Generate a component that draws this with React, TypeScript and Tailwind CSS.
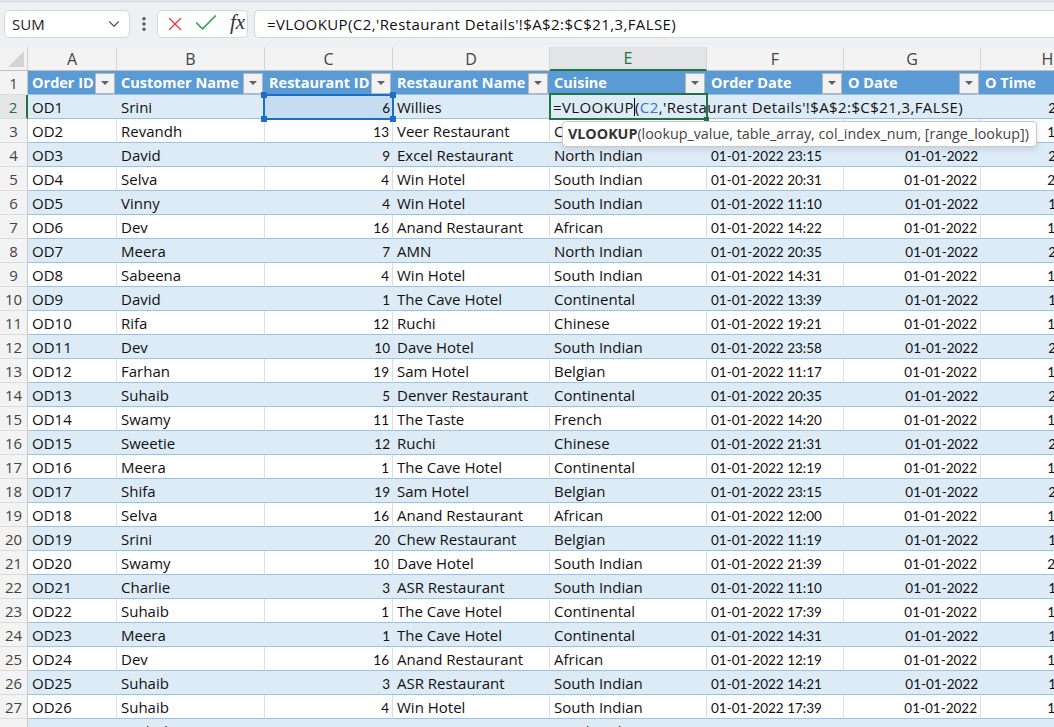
import React from "react";
import { ChevronDown, EllipsisVertical, X, Check } from "lucide-react";

const W = [
  "w-[89px]",
  "w-[148px]",
  "w-[128px]",
  "w-[157px]",
  "w-[157px]",
  "w-[137px]",
  "w-[137px]",
  "w-[134px]",
];
const LETTERS = ["A", "B", "C", "D", "E", "F", "G", "H"];
const HEADERS = [
  "Order ID",
  "Customer Name",
  "Restaurant ID",
  "Restaurant Name",
  "Cuisine",
  "Order Date",
  "O Date",
  "O Time",
];

const TXT = "font-['Open_Sans',sans-serif] text-[15px]";
const NUM = "font-['Lato',sans-serif] text-[13.5px]";

type Row = [string, string, number, string, string, string];

const DATA: Row[] = [
  ["OD1", "Srini", 6, "Willies", "", "22:00"],
  ["OD2", "Revandh", 13, "Veer Restaurant", "Continental", "10:30"],
  ["OD3", "David", 9, "Excel Restaurant", "North Indian", "23:15"],
  ["OD4", "Selva", 4, "Win Hotel", "South Indian", "20:31"],
  ["OD5", "Vinny", 4, "Win Hotel", "South Indian", "11:10"],
  ["OD6", "Dev", 16, "Anand Restaurant", "African", "14:22"],
  ["OD7", "Meera", 7, "AMN", "North Indian", "20:35"],
  ["OD8", "Sabeena", 4, "Win Hotel", "South Indian", "14:31"],
  ["OD9", "David", 1, "The Cave Hotel", "Continental", "13:39"],
  ["OD10", "Rifa", 12, "Ruchi", "Chinese", "19:21"],
  ["OD11", "Dev", 10, "Dave Hotel", "South Indian", "23:58"],
  ["OD12", "Farhan", 19, "Sam Hotel", "Belgian", "11:17"],
  ["OD13", "Suhaib", 5, "Denver Restaurant", "Continental", "20:35"],
  ["OD14", "Swamy", 11, "The Taste", "French", "14:20"],
  ["OD15", "Sweetie", 12, "Ruchi", "Chinese", "21:31"],
  ["OD16", "Meera", 1, "The Cave Hotel", "Continental", "12:19"],
  ["OD17", "Shifa", 19, "Sam Hotel", "Belgian", "23:15"],
  ["OD18", "Selva", 16, "Anand Restaurant", "African", "12:00"],
  ["OD19", "Srini", 20, "Chew Restaurant", "Belgian", "11:19"],
  ["OD20", "Swamy", 10, "Dave Hotel", "South Indian", "21:39"],
  ["OD21", "Charlie", 3, "ASR Restaurant", "South Indian", "11:10"],
  ["OD22", "Suhaib", 1, "The Cave Hotel", "Continental", "17:39"],
  ["OD23", "Meera", 1, "The Cave Hotel", "Continental", "14:31"],
  ["OD24", "Dev", 16, "Anand Restaurant", "African", "12:19"],
  ["OD25", "Suhaib", 3, "ASR Restaurant", "South Indian", "14:21"],
  ["OD26", "Suhaib", 4, "Win Hotel", "South Indian", "17:39"],
  ["OD27", "Rashid", 7, "AMN", "North Indian", "14:31"],
];

function FilterBtn() {
  return (
    <div className="w-[20px] h-[21px] shrink-0 bg-[#f2f2f2] border border-[#b8b8b8] flex items-center justify-center">
      <div className="w-0 h-0 border-l-[4px] border-r-[4px] border-t-[4px] border-l-transparent border-r-transparent border-t-[#606060]" />
    </div>
  );
}

function RowHeader({ n }: { n: number }) {
  const active = n === 2;
  return (
    <div
      className={`w-[28px] shrink-0 h-full flex items-center justify-center pt-[1px] border-b border-[#dcdcdc] font-['Open_Sans',sans-serif] text-[15px] ${
        active
          ? "bg-[#e4e6e8] text-[#217346] border-r-2 border-r-[#217346]"
          : "bg-[#f3f3f3] text-[#444] border-r border-r-[#c8c8c8]"
      }`}
    >
      {n}
    </div>
  );
}

function Cell({
  i,
  banded,
  right,
  num,
  children,
  extra = "",
}: {
  i: number;
  banded: boolean;
  right?: boolean;
  num?: boolean;
  children?: React.ReactNode;
  extra?: string;
}) {
  return (
    <div
      className={`${W[i]} shrink-0 h-full flex items-center overflow-hidden whitespace-nowrap border-b border-b-[#9bc2e6] text-[#111] ${
        num ? NUM + " pt-[3px]" : TXT + " pt-[1px]"
      } ${right ? "justify-end pr-[3px] pl-[4px]" : "pl-[4px] pr-[2px]"} ${
        banded ? "bg-[#ddebf7]" : "bg-white border-r border-r-[#dedede]"
      } ${extra}`}
    >
      {children}
    </div>
  );
}

function DataRow({ row, n }: { row: Row; n: number }) {
  const banded = n % 2 === 0;
  const [id, cust, rid, rname, cuisine, time] = row;
  const isEdit = n === 2;
  return (
    <div className="flex h-[24px]">
      <RowHeader n={n} />
      <Cell i={0} banded={banded}>{id}</Cell>
      <Cell i={1} banded={banded}>{cust}</Cell>
      <Cell i={2} banded={banded} right num extra={isEdit ? "!bg-[#c6dcf1]" : ""}>
        {rid}
      </Cell>
      <Cell i={3} banded={banded}>{rname}</Cell>
      {isEdit ? (
        <div
          className={`w-[431px] shrink-0 h-full flex items-center overflow-hidden whitespace-nowrap border-b border-b-[#9bc2e6] bg-[#ddebf7] pl-[3px] pt-[1px] text-[#111] tracking-[0.4px] ${TXT}`}
        >
          <span>=VLOOKUP</span>
          <span className="inline-block w-px h-[18px] bg-black" />
          <span>(</span>
          <span className="text-[#2f78c4]">C2</span>
          <span>,'Restaurant Details'!$A$2:$C$21,3,FALSE)</span>
        </div>
      ) : (
        <>
          <Cell i={4} banded={banded}>{cuisine}</Cell>
          <Cell i={5} banded={banded} num>{`01-01-2022 ${time}`}</Cell>
          <Cell i={6} banded={banded} right num>01-01-2022</Cell>
        </>
      )}
      <Cell i={7} banded={banded} right num extra="!pr-[13px]">
        {time}:00
      </Cell>
    </div>
  );
}

export default function App() {
  return (
    <div className="w-[1054px] h-[727px] overflow-hidden bg-[#eef0f3] font-['Open_Sans',sans-serif] text-[14.5px] relative">
      {/* top strip */}
      <div className="h-[3px] bg-[#dfe1e5]" />
      {/* formula bar */}
      <div className="flex items-center h-[28px] mt-[7px] pl-[4px]">
        <div className="w-[126px] h-full bg-white border border-[#d6d6d6] rounded-[5px] flex items-center justify-between pl-[7px] pr-[6px] text-[15px] text-[#222]">
          <span>SUM</span>
          <ChevronDown size={18} strokeWidth={1.5} className="text-[#555]" />
        </div>
        <div className="w-[27px] flex items-center justify-center text-[#555]">
          <EllipsisVertical size={18} strokeWidth={2.5} />
        </div>
        <div className="w-[91px] h-full bg-white border border-[#d6d6d6] rounded-[5px] flex items-center pl-[6px] gap-[6px]">
          <X size={22} strokeWidth={1.5} className="text-[#e03a3e]" />
          <Check size={28} strokeWidth={1.5} className="text-[#3ea454] -mt-[2px]" />
          <span className="font-['Liberation_Serif',serif] italic text-[21px] leading-none text-[#333] ml-[4px] -mt-[3px]">
            fx
          </span>
        </div>
        <div className="ml-[6px] flex-1 h-full bg-white border border-[#d6d6d6] border-r-0 rounded-l-[5px] flex items-center pl-[12px] text-[#111] text-[15px] tracking-[0.4px] whitespace-nowrap">
          =VLOOKUP(C2,'Restaurant Details'!$A$2:$C$21,3,FALSE)
        </div>
      </div>

      {/* sheet */}
      <div className="mt-[9px] relative">
        {/* column headers */}
        <div className="flex h-[24px]">
          <div className="w-[28px] shrink-0 h-full bg-[#f3f3f3] border-r border-[#d0d0d0] border-b border-b-[#c0c0c0] relative">
            <svg width="28" height="24" className="absolute left-0 top-0">
              <polygon points="8,20 24,20 24,4" fill="#d4d4d4" />
            </svg>
          </div>
          {LETTERS.map((l, i) => (
            <div
              key={l}
              className={`${W[i]} shrink-0 h-full flex items-center justify-center text-[16px] border-r border-r-[#d4d4d4] ${
                i === 4
                  ? "bg-[#e2e4e6] text-[#217346] border-b-2 border-b-[#217346]"
                  : "bg-[#f3f3f3] text-[#444] border-b border-b-[#c0c0c0]"
              }`}
            >
              {l}
            </div>
          ))}
        </div>
        {/* header row 1 */}
        <div className="flex h-[24px]">
          <RowHeader n={1} />
          {HEADERS.map((h, i) => (
            <div
              key={h}
              className={`${W[i]} shrink-0 h-full bg-[#5b9bd5] border-b border-b-[#9bc2e6] flex items-center pl-[4px] pr-[2px] pt-[1px] text-white font-bold whitespace-nowrap overflow-hidden`}
            >
              <span className="flex-1 overflow-hidden">{h}</span>
              {i < 7 && <FilterBtn />}
            </div>
          ))}
        </div>
        {DATA.map((r, idx) => (
          <DataRow key={idx} row={r} n={idx + 2} />
        ))}

        {/* C2 reference highlight */}
        <div className="absolute left-[263px] top-[47px] w-[131px] h-[26px] border-2 border-[#1c6fc2] pointer-events-none">
          <div className="absolute -left-[4px] -top-[4px] w-[6px] h-[6px] bg-[#1c6fc2]" />
          <div className="absolute -right-[4px] -top-[4px] w-[6px] h-[6px] bg-[#1c6fc2]" />
          <div className="absolute -left-[4px] -bottom-[4px] w-[6px] h-[6px] bg-[#1c6fc2]" />
          <div className="absolute -right-[4px] -bottom-[4px] w-[6px] h-[6px] bg-[#1c6fc2]" />
        </div>
        {/* E2 edit box */}
        <div className="absolute left-[549px] top-[46px] w-[159px] h-[27px] border-2 border-[#217346] pointer-events-none">
          <div className="absolute -right-[3px] -bottom-[3px] w-[5px] h-[4px] bg-[#217346]" />
        </div>
        {/* tooltip */}
        <div className="absolute left-[562px] top-[74px] w-[475px] h-[26px] bg-white border border-[#c9c9c9] rounded-[4px] shadow-[0_2px_6px_rgba(0,0,0,0.12)] flex items-center pl-[5px] whitespace-nowrap text-[#444] text-[14.3px]">
          <span className="font-bold text-[#333]">VLOOKUP</span>
          <span>(lookup_value, table_array, col_index_num, [range_lookup])</span>
        </div>
      </div>
    </div>
  );
}
